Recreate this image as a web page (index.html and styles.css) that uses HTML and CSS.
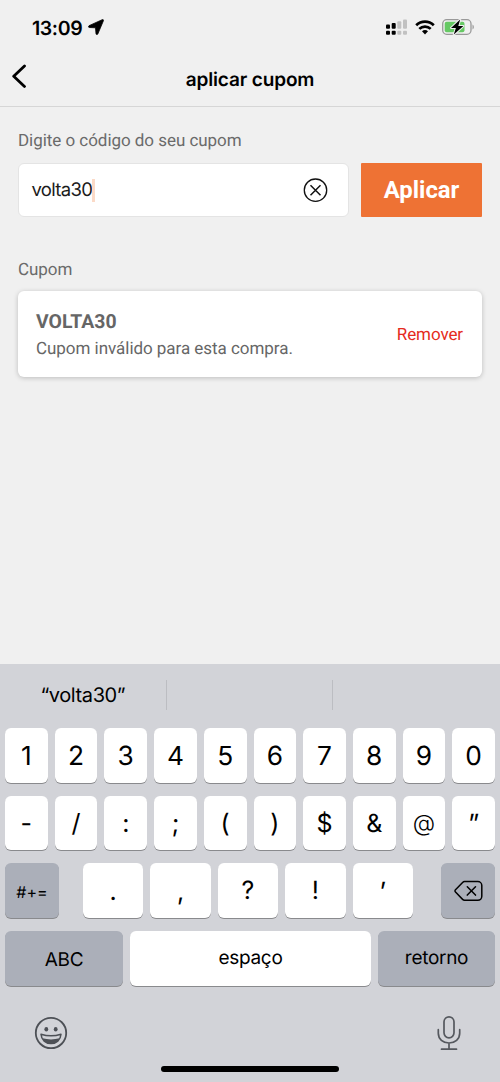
FILE: index.html
```html
<!DOCTYPE html>
<html lang="pt-BR">
<head>
<meta charset="utf-8">
<meta name="viewport" content="width=device-width, initial-scale=1">
<title>aplicar cupom</title>
<link rel="stylesheet" href="styles.css">
</head>
<body>
<div class="screen">
  <div class="status-bar">
    <div class="clock">
      <span class="time">13:09</span>
      <svg class="location" width="16" height="16" viewBox="0 0 16 16"><path d="M14.200.7 1 6.700c-.9.500-.7 1.700.3 1.800l6.200.3.500 5.900c.1 1 1.300 1.200 1.800.3L15.400 1.800c.4-.8-.4-1.500-1.200-1.100z" stroke="#000" stroke-width=".8"/></svg>
    </div>
    <div class="indicators">
      <svg width="22" height="16" viewBox="0 0 22 16">
        <rect x="1" y="5.400" width="4" height="4.300" rx="1"/><rect x="6.700" y="4" width="4" height="5.700" rx="1"/>
        <rect x="1" y="11.800" width="4" height="4" rx="1"/><rect x="6.700" y="11.800" width="4" height="4" rx="1"/>
        <g fill="#c1c1c1"><rect x="12.300" y="2.200" width="4" height="7.500" rx="1"/><rect x="18" y=".5" width="4" height="9.200" rx="1"/><rect x="12.300" y="11.800" width="4" height="4" rx="1"/><rect x="18" y="11.800" width="4" height="4" rx="1"/></g>
      </svg>
      <svg width="20" height="15" viewBox="0 0 20 15" fill="none" stroke="#000" stroke-width="2.700">
        <path d="M1.200 5.300C6.200.5 13.800.5 18.800 5.300"/><path d="M4.300 8.900c3.200-3.100 8.200-3.100 11.400 0"/><path d="M7 11.200c1.700-1.500 4.300-1.500 6 0L10 14.400z" fill="#000" stroke="none"/>
      </svg>
      <svg width="33" height="16" viewBox="0 0 33 16">
        <rect x=".7" y=".7" width="28.300" height="14.600" rx="4" fill="none" stroke="#999" stroke-width="1.300"/>
        <rect x="2.700" y="2.700" width="19.800" height="10.600" rx="2" fill="#66c964"/>
        <path d="M30.500 5.500v5c1.800-.7 1.800-4.300 0-5z" fill="#999"/>
        <path d="M18.200.4 9 8.900h4.900L11.800 15.600l9.600-8.500h-5.100z" stroke="#f0f0f0" stroke-width="2" paint-order="stroke" stroke-linejoin="round"/>
      </svg>
    </div>
  </div>
  <header class="header">
    <svg class="back" width="16" height="24" viewBox="0 0 16 24"><path d="M13.500 2 2.700 12.300 13.500 22.400" fill="none" stroke="#000" stroke-width="2.800" stroke-linecap="round" stroke-linejoin="round"/></svg>
    <h1 class="title">aplicar cupom</h1>
  </header>
  <main class="content">
    <div class="label">Digite o código do seu cupom</div>
    <div class="form">
      <div class="field">
        <span class="value">volta30</span><span class="caret"></span>
        <svg class="clear" width="25" height="25" viewBox="0 0 25 25" fill="none" stroke="#111" stroke-width="1.300"><circle cx="12.500" cy="12.200" r="11.200"/><path d="m7.500 7.200 10 10m0-10-10 10" stroke-width="1.500"/></svg>
      </div>
      <button class="apply">Aplicar</button>
    </div>
    <div class="label coupon-label">Cupom</div>
    <section class="card">
      <div>
        <div class="code">VOLTA30</div>
        <div class="message">Cupom inválido para esta compra.</div>
      </div>
      <a class="remove">Remover</a>
    </section>
  </main>
  <div class="keyboard">
    <div class="suggestions"><span class="suggestion">“volta30”</span><span class="suggestion"></span><span class="suggestion"></span></div>
    <div class="keys">
      <div class="row ten"><span class="key">1</span><span class="key">2</span><span class="key">3</span><span class="key">4</span><span class="key">5</span><span class="key">6</span><span class="key">7</span><span class="key">8</span><span class="key">9</span><span class="key">0</span></div>
      <div class="row ten signs"><span class="key">-</span><span class="key">/</span><span class="key">:</span><span class="key">;</span><span class="key">(</span><span class="key">)</span><span class="key">$</span><span class="key">&amp;</span><span class="key at">@</span><span class="key">”</span></div>
      <div class="row punctuation signs">
        <span class="key dark symbols">#+=</span>
        <div class="middle"><span class="key">.</span><span class="key">,</span><span class="key mark">?</span><span class="key mark">!</span><span class="key">’</span></div>
        <span class="key dark backspace"><svg width="29" height="22" viewBox="0 0 29 22" fill="none" stroke="#000" stroke-width="1.500" stroke-linejoin="round" stroke-linecap="round"><path d="M10.500 1.500h13.300a4 4 0 0 1 4 4v10.800a4 4 0 0 1-4 4H10.500c-.8 0-1.300-.3-1.900-.9L1.500 12c-.7-.7-.7-1.500 0-2.200l7.100-7.400c.6-.6 1.100-.9 1.900-.9z"/><path d="m13.300 6.700 8.200 8.400m0-8.400-8.200 8.400"/></svg></span>
      </div>
      <div class="row bottom"><span class="key dark word abc">ABC</span><span class="key word">espaço</span><span class="key dark word">retorno</span></div>
    </div>
    <div class="dock">
      <svg width="34" height="34" viewBox="0 0 34 34"><circle cx="17" cy="17" r="15.200" fill="none" stroke="#4d5056" stroke-width="1.800"/><ellipse cx="12.300" cy="13.200" rx="1.900" ry="2.200" fill="#4d5056"/><ellipse cx="21.700" cy="13.200" rx="1.900" ry="2.200" fill="#4d5056"/><path d="M7 18.300c6.500 2 13.500 2 20 0-.4 5.700-4.800 9.300-10 9.300S7.400 24 7 18.300z" fill="none" stroke="#4d5056" stroke-width="1.500" stroke-linejoin="round"/><path d="M8.200 22.300c6 1.500 11.600 1.500 17.600 0-1.700 3.500-5 5.200-8.800 5.200s-7.100-1.700-8.800-5.200z" fill="#4d5056"/></svg>
      <svg width="24" height="36" viewBox="0 0 24 36" fill="none" stroke="#55585e" stroke-width="1.700" stroke-linecap="round"><rect x="7" y="1.800" width="10" height="21" rx="5"/><path d="M1.300 14.700v3.600c0 5.800 4.700 9.700 10.700 9.700s10.700-3.900 10.700-9.700v-3.600M12 28v6M4.500 34.200h15"/></svg>
    </div>
    <div class="home-indicator"></div>
  </div>
</div>
</body>
</html>
```

FILE: styles.css
```css
* { box-sizing: border-box; }
body { margin: 0; background: #f0f0f0; font-family: Roboto, sans-serif; color: #000; text-rendering: geometricPrecision; }
.screen { width: 500px; height: 1082px; display: flex; flex-direction: column; overflow: hidden; }
svg { display: block; flex: none; }

.status-bar { height: 54px; padding: 0 25px 0 32px; display: flex; justify-content: space-between; align-items: center; }
.clock { display: flex; align-items: center; gap: 6px; font: 600 19.5px/24px Inter, sans-serif; }
.time { letter-spacing: -0.4px; padding-top: 1px; }
.indicators { display: flex; align-items: center; gap: 7.5px; }

.header { height: 53px; border-bottom: 1px solid #d6d6d6; display: grid; grid-template-columns: 30px 1fr 30px; padding: 0 11px; }
.back { margin-top: 10px; }
.title { margin: 14px 0 0; text-align: center; font: 600 19px/24px Inter, sans-serif; letter-spacing: -0.14px; }

.content { flex: 1; padding: 24px 18px 0; }
.label { font-size: 17px; line-height: 20px; color: #6a6a6a; letter-spacing: -0.04px; }
.form { display: flex; gap: 12px; margin-top: 12px; height: 54px; }
.field { flex: 1; display: flex; align-items: center; padding: 0 20px 0 12.5px; background: #fff; border: 1px solid #e4e4e4; border-radius: 6px; }
.value { font: 400 18.5px/24px Inter, sans-serif; letter-spacing: -0.7px; color: #1b1b1b; }
.caret { width: 3px; height: 23px; background: #fbdac7; }
.clear { margin-left: auto; }
.apply { width: 121px; border: 0; padding: 0 0 1px; background: #ee7234; color: #fff; font: 700 23.9px/28px Roboto, sans-serif; border-radius: 1px; }
.coupon-label { margin-top: 43px; }
.card { margin-top: 11px; height: 86px; padding: 0 19px 0 18px; display: flex; align-items: center; justify-content: space-between; background: #fff; border-radius: 6px; box-shadow: 0 1px 5px rgba(0,0,0,.22); }
.code { margin-top: 3px; font-size: 19.4px; line-height: 24px; font-weight: 700; color: #666; }
.message { margin-top: 3px; font-size: 17px; line-height: 24px; letter-spacing: -0.04px; color: #666; }
.remove { padding-top: 1px; font-size: 17px; line-height: 20px; letter-spacing: -0.1px; color: #e52b20; }

.keyboard { height: 418px; background: #d2d3d8; font-family: Inter, sans-serif; }
.suggestions { height: 64px; padding-top: 16px; display: grid; grid-template-columns: repeat(3, 1fr); }
.suggestion { height: 30px; text-align: center; font-size: 20px; line-height: 31px; letter-spacing: -0.4px; border-right: 1px solid #bcbdc2; }
.suggestion:last-child { border: 0; }
.keys { display: flex; flex-direction: column; gap: 13px; padding: 0 5px; }
.row { display: grid; gap: 7px; height: 54.7px; }
.ten { grid-template-columns: repeat(10, 1fr); }
.punctuation { grid-template-columns: 54px 330px 54px; gap: 0; justify-content: space-between; }
.middle { display: grid; grid-template-columns: repeat(5, 1fr); gap: 7px; margin-left: -2px; margin-right: 2px; }
.bottom { grid-template-columns: 118px 1fr 117px; }
.key { display: flex; align-items: center; justify-content: center; background: #fff; border-radius: 6px; box-shadow: 0 1px 0 #898a8d; font-size: 26.3px; padding-top: 2px; }
.signs .key { font-size: 25px; }
.signs .at { font-size: 23px; font-weight: 350; padding-top: 0; }
.signs .mark { padding-top: 0; }
.dark { background: #abafb9; }
.signs .symbols { font-size: 16px; padding-top: 2px; }
.signs .backspace { padding-top: 0; }
.word { font-size: 19px; letter-spacing: -0.3px; padding: 0 0 2px; }
.abc { padding: 2px 0 0; }
.dock { display: flex; justify-content: space-between; align-items: center; height: 36px; margin-top: 29.5px; padding: 0 39px 0 34px; }
.home-indicator { width: 178px; height: 6px; margin: 14.5px auto 0; border-radius: 3px; background: #000; }
```
